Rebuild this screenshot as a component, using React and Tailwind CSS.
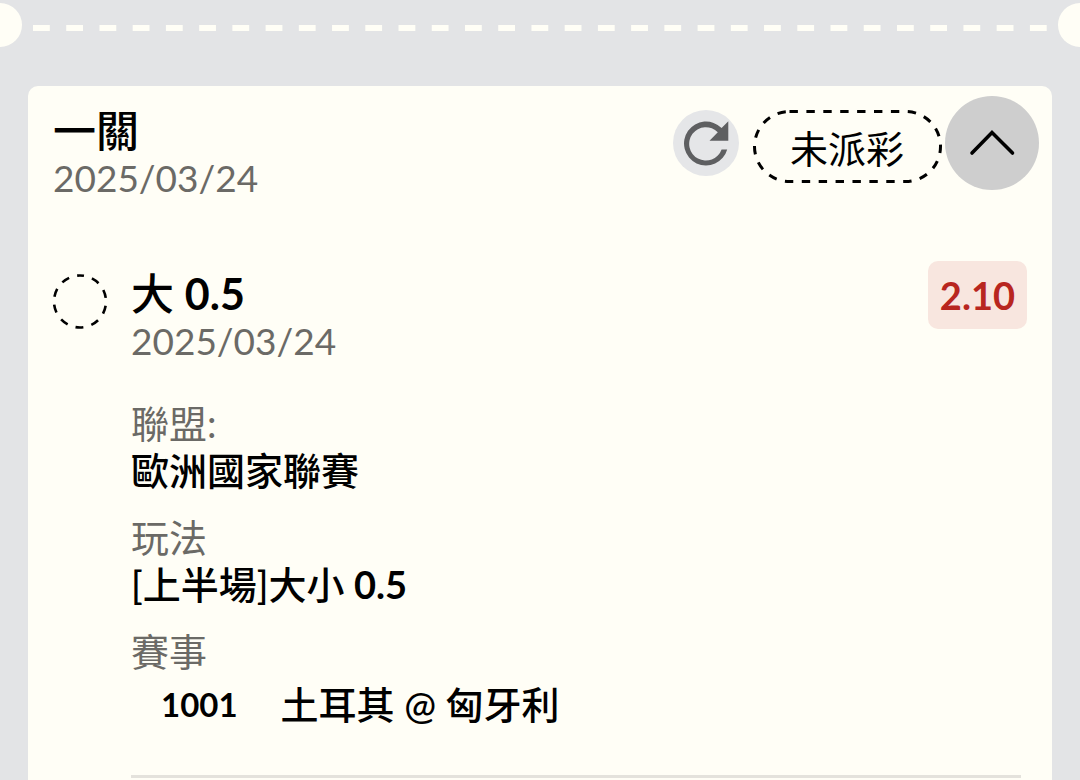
import React, { useState } from "react";

const bet = {
  type: "一關",
  date: "2025/03/24",
  status: "未派彩",
  items: [
    {
      title: "大",
      line: "0.5",
      date: "2025/03/24",
      odds: "2.10",
      league: "歐洲國家聯賽",
      play: "[上半場]大小",
      matchNo: "1001",
      match: "土耳其 @ 匈牙利",
    },
  ],
};

const App = () => {
  const [open, setOpen] = useState(true);

  return (
    <div className="min-h-screen flex flex-col overflow-hidden bg-[#e3e4e6] text-black font-['Lato','Noto_Sans_CJK_TC',sans-serif]">
      <TicketDivider />

      <main className="flex-1 mx-7 mt-[39px] rounded-t-[10px] bg-[#fffef6]">
        <header className="flex items-start justify-between pl-[25px] pr-[13px] pt-[10px]">
          <div className="pt-[11px]">
            <h1 className="text-[43px] leading-[47px] font-medium">{bet.type}</h1>
            <p className="text-[37px] leading-[47px] text-[#6b6a66]">{bet.date}</p>
          </div>

          <div className="flex items-center">
            <button
              type="button"
              aria-label="重新整理"
              className="w-[66px] h-[66px] rounded-full bg-[#e5e6e8] flex items-center justify-center"
            >
              <RefreshIcon />
            </button>
            <StatusPill text={bet.status} />
            <button
              type="button"
              aria-label="展開"
              aria-expanded={open}
              onClick={() => setOpen(!open)}
              className="ml-1 w-[94px] h-[94px] rounded-full bg-[#cecece] flex items-center justify-center"
            >
              <ChevronIcon open={open} />
            </button>
          </div>
        </header>

        {open && bet.items.map((item) => <BetItem key={item.matchNo} item={item} />)}
      </main>
    </div>
  );
};

const BetItem = ({ item }) => (
  <section className="flex items-start gap-[23px] px-[25px] pt-[60px]">
    <svg className="mt-[13px] w-[55px] h-[55px] shrink-0" viewBox="0 0 55 55" fill="none">
      <circle
        cx="27"
        cy="27.5"
        r="26"
        stroke="#000"
        strokeWidth="2.6"
        strokeDasharray="8.1 8.236"
        strokeDashoffset="4"
        transform="rotate(-90 27 27.5)"
      />
    </svg>

    <div className="flex-1">
      <div className="flex items-start justify-between">
        <div className="pt-[9px]">
          <h2 className="text-[43px] leading-[47px] font-medium">
            {item.title} <span className="font-bold">{item.line}</span>
          </h2>
          <p className="text-[37px] leading-[47px] text-[#6b6a66]">{item.date}</p>
        </div>
        <span className="h-[68px] px-3 rounded-[10px] bg-[#f8e6df] flex items-center pt-px text-[38px] font-bold text-[#b8261f]">
          {item.odds}
        </span>
      </div>

      <dl className="mt-9 mr-[6px] pb-[47px] border-b-[3px] border-[#e4e2dc] text-[38px] leading-[47px] font-medium">
        <Label>聯盟:</Label>
        <dd className="mb-5">{item.league}</dd>
        <Label>玩法</Label>
        <dd className="mb-5">
          {item.play} <span className="font-bold">{item.line}</span>
        </dd>
        <Label>賽事</Label>
        <dd className="mt-[6px] ml-[30px] flex items-center gap-[43px]">
          <span className="text-[33px] font-bold">{item.matchNo}</span>
          <span>{item.match}</span>
        </dd>
      </dl>
    </div>
  </section>
);

const Label = ({ children }) => (
  <dt className="font-normal text-[#6b6a66]">{children}</dt>
);

const StatusPill = ({ text }) => (
  <span className="relative mt-[7px] ml-[14px] h-[73px] px-[37px] pt-[3px] flex items-center text-[38px]">
    <svg className="absolute inset-0 w-full h-full overflow-visible" fill="none">
      <rect
        x="1.5"
        y="1.5"
        width="186"
        height="70"
        rx="35"
        stroke="#000"
        strokeWidth="3"
        strokeDasharray="8.4 8.5"
      />
    </svg>
    {text}
  </span>
);

/* 票券撕線 */
const TicketDivider = () => (
  <div className="flex items-center justify-between pt-[3px]">
    <div className="w-11 h-11 -ml-[22px] rounded-full bg-[#fffef6] shrink-0" />
    <svg className="mt-[5px] ml-[11px] mr-[10px] flex-1 h-[6px]">
      <line x1="0" y1="3" x2="100%" y2="3" stroke="#fffef6" strokeWidth="6" strokeDasharray="16.8 16.43" />
    </svg>
    <div className="w-11 h-11 -mr-[22px] rounded-full bg-[#fffef6] shrink-0" />
  </div>
);

const RefreshIcon = () => (
  <svg className="w-[66px] h-[66px]" viewBox="0 0 66 66" fill="#5e5f61">
    <path d="M54.2 39.5A22 22 0 1 1 48.6 18L55.3 11.3V30.7H36.5L44.8 22.2A16.7 16.7 0 1 0 48.6 39.5Z" />
  </svg>
);

const ChevronIcon = ({ open }) => (
  <svg
    className={open ? "w-[94px] h-[94px]" : "w-[94px] h-[94px] rotate-180"}
    viewBox="0 0 94 94"
    fill="none"
  >
    <path d="M27 57 47 36.5 67.5 57" stroke="#000" strokeWidth="3.6" strokeLinecap="round" />
  </svg>
);

export default App;
